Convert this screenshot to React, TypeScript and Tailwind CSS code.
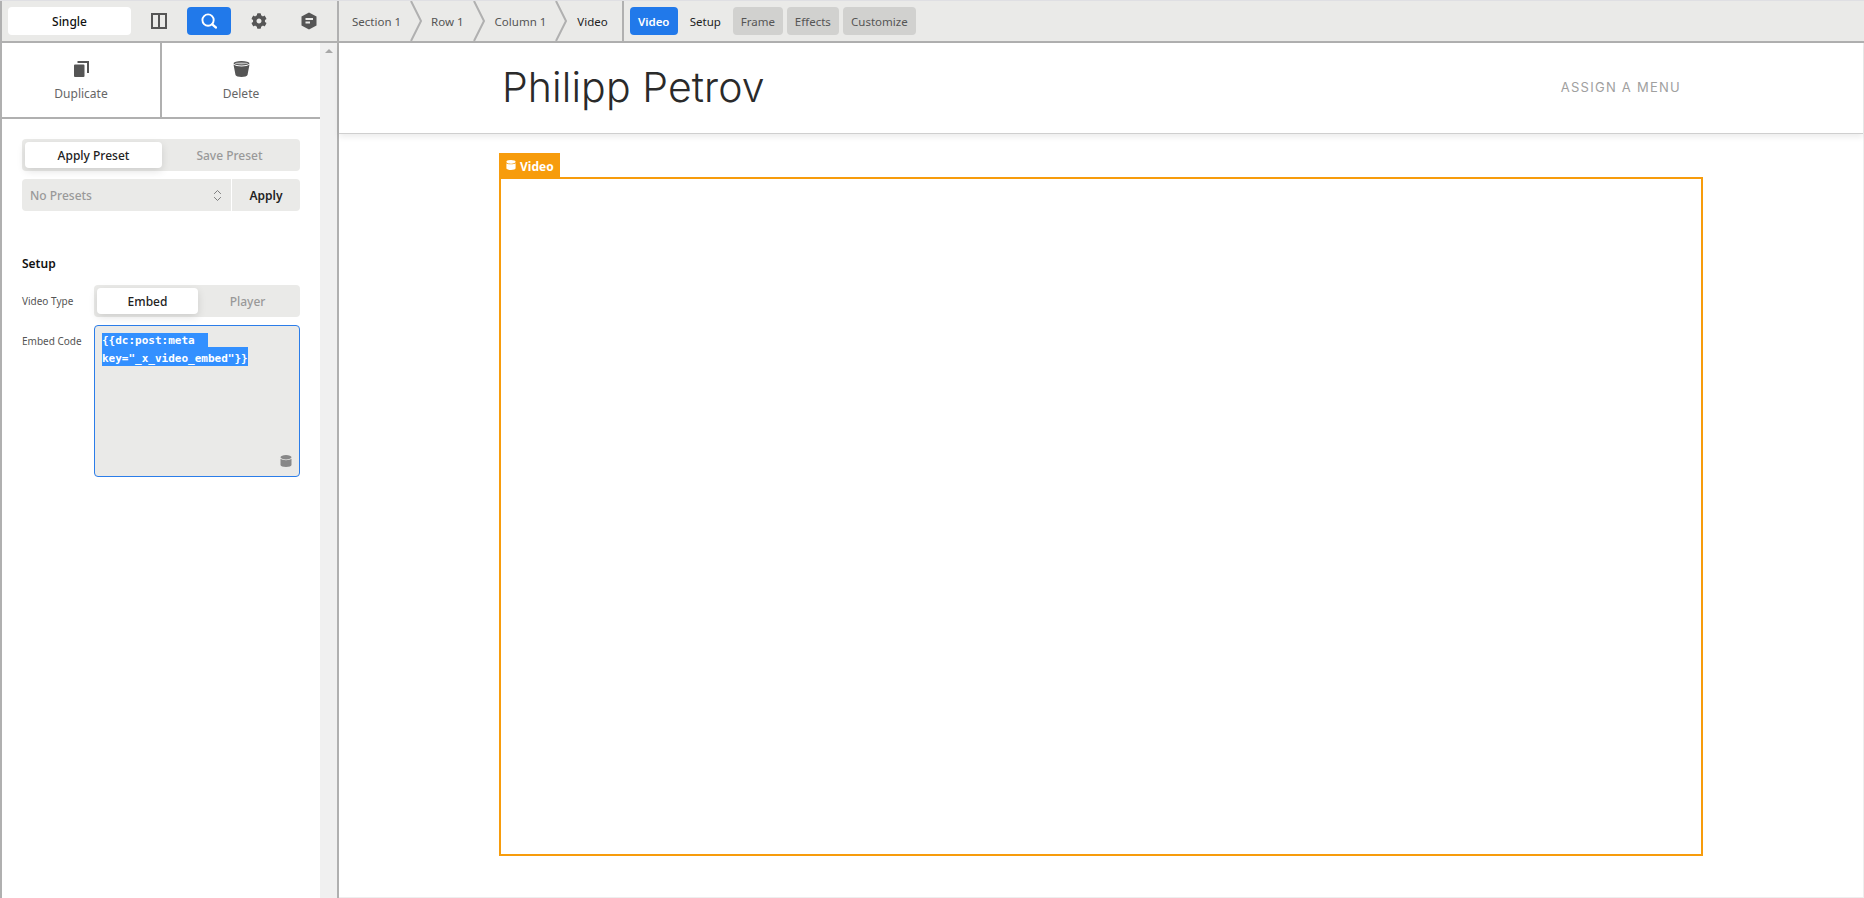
import { ChevronsUpDown } from 'lucide-react';
import { FaCog } from 'react-icons/fa';

function HexIcon() {
  return (
    <svg width="16" height="18" viewBox="0 0 16 18">
      <path d="M8 0.5 15.5 4.5V13.5L8 17.5 0.5 13.5V4.5Z" fill="#555" />
      <rect x="4.5" y="6" width="7.5" height="2" fill="#eaeae8" />
      <rect x="4.5" y="9.5" width="4.5" height="2" fill="#eaeae8" />
    </svg>
  );
}

function DbIcon({ size, color }: { size: number; color: string }) {
  return (
    <svg width={size} height={size} viewBox="0 0 12 12" fill={color}>
      <ellipse cx="6" cy="2.2" rx="5.5" ry="2.2" />
      <path d="M0.5 3.8C2 5.6 10 5.6 11.5 3.8V10C11.5 11.3 9 12 6 12S0.5 11.3 0.5 10Z" />
    </svg>
  );
}

function Crumb({ label, active, ml }: { label: string; active?: boolean; ml: string }) {
  return (
    <div className={`flex items-center h-full ${ml}`}>
      <span className={`pt-0.5 ${active ? 'text-[#222]' : 'text-[#555]'}`}>{label}</span>
      {!active && (
        <svg width="12" height="40" viewBox="0 0 12 40" className="ml-[9px] shrink-0">
          <polyline points="1,0 11,20 1,40" fill="none" stroke="#b0b0b0" strokeWidth="2" />
        </svg>
      )}
    </div>
  );
}

function Segmented({ left, right, widthLeft }: { left: string; right: string; widthLeft: string }) {
  return (
    <div className="flex h-8 p-[3px] rounded bg-[#eaeae8] text-[12px]">
      <div className={`flex items-center justify-center pt-0.5 bg-white rounded-sm font-medium text-[#222] shadow-[0_3px_8px_rgba(0,0,0,0.12)] ${widthLeft}`}>
        {left}
      </div>
      <div className="flex flex-1 items-center justify-center pt-0.5 font-medium text-[#999]">{right}</div>
    </div>
  );
}

function Sidebar() {
  return (
    <aside className="flex w-[339px] shrink-0 border-l-2 border-r-2 border-[#b0b0b0]">
      <div className="flex flex-col w-[318px] bg-white">
        <div className="flex h-[76px] border-b-2 border-[#b0b0b0] text-[#666]">
          <div className="flex flex-col items-center w-[158px] pt-[18px]">
            <svg width="15" height="16" viewBox="0 0 15 16">
              <path d="M0 4.5a1 1 0 0 1 1-1h8.5a1 1 0 0 1 1 1V15a1 1 0 0 1-1 1H1a1 1 0 0 1-1-1Z" fill="#555" />
              <path d="M3.5 1H14V12" fill="none" stroke="#555" strokeWidth="2" />
            </svg>
            <span className="mt-2 text-[12px]">Duplicate</span>
          </div>
          <div className="w-0.5 bg-[#b0b0b0]" />
          <div className="flex flex-col items-center flex-1 pt-[18px]">
            <svg width="17" height="16" viewBox="0 0 17 16">
              <ellipse cx="8.5" cy="2.2" rx="8" ry="2.2" fill="#555" />
              <path d="M0.5 3.5C3 6 14 6 16.5 3.5L14.5 14C14 16.5 3 16.5 2.5 14Z" fill="#555" />
              <ellipse cx="8.5" cy="2.4" rx="6.5" ry="1" fill="#bbb" />
            </svg>
            <span className="mt-2 text-[12px]">Delete</span>
          </div>
        </div>

        <div className="px-5 pt-5">
          <Segmented left="Apply Preset" right="Save Preset" widthLeft="w-[137px]" />
          <div className="flex gap-px mt-2 h-8 text-[12px]">
            <div className="flex flex-1 items-center justify-between pl-2 pr-[6px] rounded-l bg-[#eaeae8] font-medium text-[#999]">
              <span className="pt-0.5">No Presets</span>
              <ChevronsUpDown size={15} strokeWidth={1.5} className="text-[#777]" />
            </div>
            <div className="flex w-[68px] items-center justify-center pt-0.5 rounded-r bg-[#eaeae8] font-semibold text-[#222]">
              Apply
            </div>
          </div>

          <h3 className="mt-[43px] text-[12px] leading-5 font-semibold text-[#111]">Setup</h3>

          <div className="flex items-center mt-[11px]">
            <span className="w-[72px] text-[10px] text-[#555]">Video Type</span>
            <div className="flex-1">
              <Segmented left="Embed" right="Player" widthLeft="w-[101px]" />
            </div>
          </div>

          <div className="flex mt-2">
            <span className="w-[72px] pt-[9px] text-[10px] leading-[14px] text-[#555]">Embed Code</span>
            <div className="relative flex-1 h-[152px] pl-[7px] pt-[7px] rounded border border-[#2b7de9] bg-[#eaeae8] font-['DejaVu_Sans_Mono',monospace] text-[11px] font-bold text-white">
              <div className="w-[106px] h-[14px] pt-px leading-[13px] bg-[#3390ff]">{'{{dc:post:meta'}</div>
              <div className="w-fit h-[19px] pt-1 leading-[15px] bg-[#3390ff]">{'key="_x_video_embed"}}'}</div>
              <div className="absolute right-[7px] bottom-[9px]">
                <DbIcon size={12} color="#888" />
              </div>
            </div>
          </div>
        </div>
      </div>
      <div className="flex flex-col items-center flex-1 pt-[6px] bg-[#f0f0f0]">
        <div className="w-0 h-0 border-x-[4px] border-b-[4px] border-x-transparent border-b-[#a8a8a8]" />
      </div>
    </aside>
  );
}

export default function App() {
  return (
    <div className="flex flex-col w-[1864px] h-[898px] overflow-hidden bg-white font-['Noto_Sans',sans-serif] border-t border-[#dfdfe3]">
      <header className="flex h-[42px] shrink-0 bg-[#eaeae8] border-b-2 border-l-2 border-[#b0b0b0] text-[11.5px]">
        <div className="flex items-center w-[335px] shrink-0 pl-1.5">
          <div className="flex w-[123px] h-7 items-center justify-center pt-0.5 rounded bg-white text-[12px] font-medium text-[#111]">
            Single
          </div>
          <div className="flex w-14 justify-center">
            <svg width="16" height="16" viewBox="0 0 16 16">
              <path d="M1 1H15V15H1ZM8 1V15" fill="none" stroke="#555" strokeWidth="2" />
            </svg>
          </div>
          <div className="flex w-11 h-7 items-center justify-center rounded bg-[#2179ea]">
            <svg width="16" height="16" viewBox="0 0 17 17" fill="none" stroke="#fff" strokeWidth="2">
              <circle cx="7.5" cy="7.5" r="6" />
              <path d="M12 12L16 15.5" strokeLinecap="round" strokeWidth="2.5" />
            </svg>
          </div>
          <div className="flex w-[56px] justify-center">
            <FaCog size={16} className="text-[#555]" />
          </div>
          <div className="flex w-[44px] justify-center">
            <HexIcon />
          </div>
        </div>
        <div className="w-0.5 bg-[#b0b0b0]" />
        <div className="flex items-center pl-[13px]">
          <Crumb label="Section 1" ml="" />
          <Crumb label="Row 1" ml="ml-[9px]" />
          <Crumb label="Column 1" ml="ml-[10px]" />
          <Crumb label="Video" ml="ml-[10px]" active />
        </div>
        <div className="w-0.5 ml-[14px] bg-[#b0b0b0]" />
        <div className="flex items-center ml-[6px]">
          <div className="flex w-12 h-7 items-center justify-center pt-0.5 rounded-sm bg-[#2179ea] font-semibold text-white">Video</div>
          <span className="ml-3 mr-3 pt-0.5 text-[#222]">Setup</span>
          <div className="flex w-[50px] h-7 items-center justify-center pt-0.5 rounded-sm bg-[#d1d1cf] text-[#555]">Frame</div>
          <div className="flex w-[52px] h-7 ml-1 items-center justify-center pt-0.5 rounded-sm bg-[#d1d1cf] text-[#555]">Effects</div>
          <div className="flex w-[73px] h-7 ml-1 items-center justify-center pt-0.5 rounded-sm bg-[#d1d1cf] text-[#555]">Customize</div>
        </div>
      </header>

      <div className="flex flex-1 min-h-0">
        <Sidebar />
        <main className="flex-1 min-w-0 border-r border-b border-[#eeeeee]">
          <div className="flex items-center justify-between h-[91px] pl-[163px] pr-[182px] border-b border-[#cfcfcf] shadow-[0_3px_6px_rgba(0,0,0,0.08)]">
            <span className="font-['Inter',sans-serif] text-[41px] font-[350] tracking-[0.1px] text-[#2a2a2a]">Philipp Petrov</span>
            <span className="font-['Inter',sans-serif] text-[13px] tracking-[1.25px] text-[#a0a0a0]">ASSIGN A MENU</span>
          </div>
          <div className="pl-[160px] pt-[19px]">
            <div className="flex w-[61px] h-6 items-center gap-1 pl-[7px] bg-[#f79c0c] text-[12px] font-bold text-white">
              <DbIcon size={10} color="#fff" />
              <span className="pt-[3px]">Video</span>
            </div>
            <div className="w-[1204px] h-[679px] border-2 border-[#f79c0c]" />
          </div>
        </main>
      </div>
    </div>
  );
}
